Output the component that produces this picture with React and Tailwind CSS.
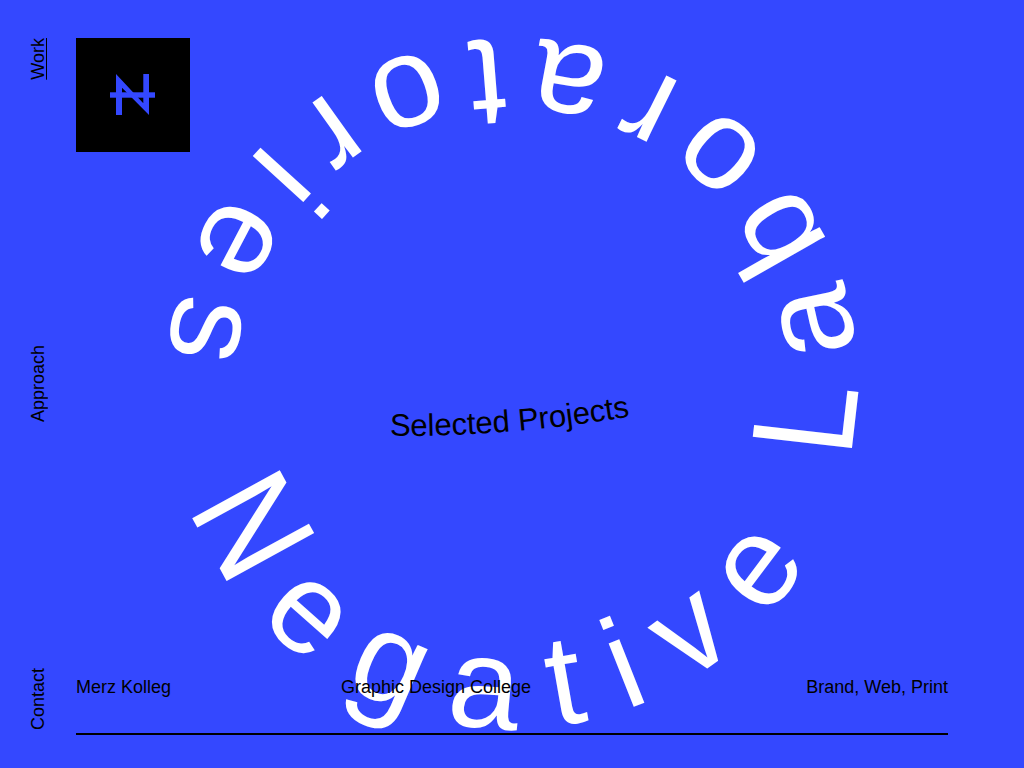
const sans = { fontFamily: '"Liberation Sans", Arial, sans-serif' };

// advance widths of Liberation Sans, in em
const LETTERS = [
  ['N', 0.722], ['e', 0.556], ['g', 0.556], ['a', 0.556], ['t', 0.278], ['i', 0.222], ['v', 0.5], ['e', 0.556],
  [' ', 0.278],
  ['L', 0.556], ['a', 0.556], ['b', 0.556], ['o', 0.556], ['r', 0.333], ['a', 0.556], ['t', 0.278], ['o', 0.556],
  ['r', 0.333], ['i', 0.222], ['e', 0.556], ['s', 0.5],
];

const CX = 512;
const CY = 384;
const R = 345;
const START = (159 * Math.PI) / 180;
const EM_WIDTH = 128;
const SPACING = 38;

// letters sit on the ring counter-clockwise, tops toward the centre
function placeLetters() {
  let run = 0;
  return LETTERS.map(([ch, adv]) => {
    const mid = run + (adv * EM_WIDTH) / 2;
    run += adv * EM_WIDTH + SPACING;
    const t = START - mid / R;
    const x = CX + R * Math.cos(t);
    const y = CY + R * Math.sin(t);
    const deg = (Math.atan2(-Math.cos(t), Math.sin(t)) * 180) / Math.PI;
    const isCap = ch === 'N' || ch === 'L';
    return {
      ch,
      size: isCap ? 145 : 129,
      transform: `translate(${x} ${y}) rotate(${deg}) scale(${isCap ? 0.883 : 1} 1)`,
    };
  });
}

const Ring = () => (
  <svg className="absolute inset-0" width="1024" height="768" viewBox="0 0 1024 768">
    <defs>
      <path id="caption" d="M 390 436 Q 510 437 640 415" fill="none" />
    </defs>
    <g fill="#fff" textAnchor="middle" style={sans}>
      {placeLetters().map((l, i) => (
        <text key={i} fontSize={l.size} transform={l.transform}>{l.ch}</text>
      ))}
    </g>
    <text fill="#000" fontSize="31" style={sans}>
      <textPath href="#caption">Selected Projects</textPath>
    </text>
  </svg>
);

const Logo = () => (
  <div className="w-[113.7px] h-[113.7px] bg-black flex items-center justify-center">
    <svg width="46" height="42" viewBox="0 0 46 42" fill="#3448ff">
      <path d="M6 0 L33.3 29.3 V0 H39 V41 L12 13.7 V41 H6 Z" />
      <rect x="0" y="18.3" width="45" height="5.4" />
    </svg>
  </div>
);

const SideLink = ({ children, active, className }) => (
  <a className={`[writing-mode:vertical-rl] rotate-180 text-black text-[18px] leading-[20px] ${active ? 'underline underline-offset-[-1.5px]' : ''} ${className}`}>
    {children}
  </a>
);

export default function App() {
  return (
    <div className="relative w-full h-screen overflow-hidden bg-[#3448ff] flex text-black" style={sans}>
      <Ring />
      <nav className="relative w-[76px] py-[38px] grid grid-rows-[1fr_auto_1fr] justify-items-start pl-[28px]">
        <SideLink active className="self-start">Work</SideLink>
        <SideLink>Approach</SideLink>
        <SideLink className="self-end">Contact</SideLink>
      </nav>
      <main className="relative flex-1 pt-[38px] pb-[33px] pr-[76px] flex flex-col justify-between">
        <Logo />
        <footer className="grid grid-cols-[265px_1fr_auto] border-b-2 border-black pb-[36px] text-[18px] leading-[20px]">
          <span>Merz Kolleg</span>
          <span>Graphic Design College</span>
          <span>Brand, Web, Print</span>
        </footer>
      </main>
    </div>
  );
}
